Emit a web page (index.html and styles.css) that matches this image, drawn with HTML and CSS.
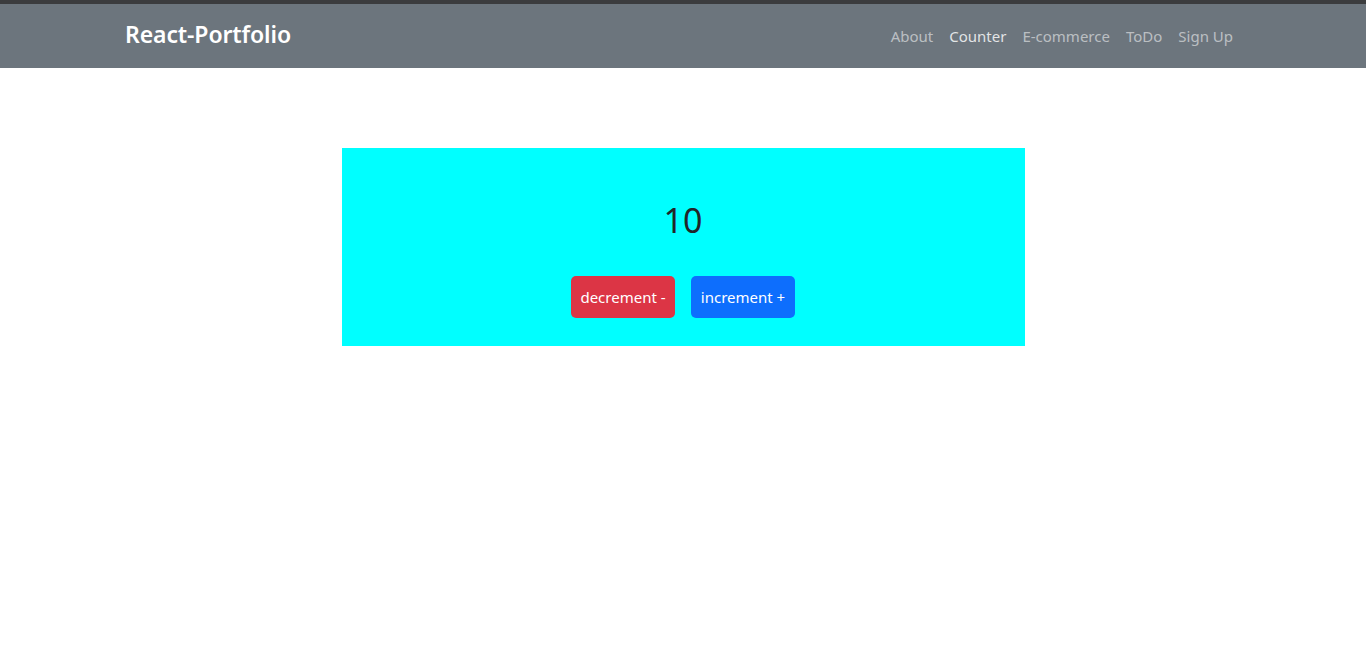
FILE: index.html
```html
<!DOCTYPE html>
<html lang="en">
<head>
<meta charset="utf-8">
<title>React-Portfolio</title>
<link rel="stylesheet" href="styles.css">
</head>
<body>
  <div class="topstrip"></div>
  <nav class="navbar">
    <div class="container">
      <a class="brand" href="#">React-Portfolio</a>
      <ul class="nav">
        <li><a class="nav-link" href="#">About</a></li>
        <li><a class="nav-link active" href="#">Counter</a></li>
        <li><a class="nav-link" href="#">E-commerce</a></li>
        <li><a class="nav-link" href="#">ToDo</a></li>
        <li><a class="nav-link" href="#">Sign Up</a></li>
      </ul>
    </div>
  </nav>
  <main class="main">
    <section class="counter">
      <h1 class="count">10</h1>
      <div class="actions">
        <button class="btn btn-danger">decrement -</button>
        <button class="btn btn-primary">increment +</button>
      </div>
    </section>
  </main>
</body>
</html>
```
FILE: styles.css
```css
* { box-sizing: border-box; }
html, body { margin: 0; padding: 0; }
body {
  font-family: "Noto Sans", "Open Sans", "Liberation Sans", sans-serif;
  background: #fff;
  color: #212529;
}
.topstrip {
  height: 4px;
  background: #3b3c3e;
}
.navbar {
  background: #6c757d;
  height: 64px;
  display: flex;
  align-items: center;
}
.container {
  width: 1116px;
  margin: 0 auto;
  display: flex;
  align-items: center;
  justify-content: space-between;
}
.brand {
  color: #fff;
  text-decoration: none;
  font-size: 23px;
  font-weight: 600;
  letter-spacing: -0.1px;
  margin-top: -4px;
}
.nav {
  list-style: none;
  margin: 0;
  padding: 0;
  display: flex;
}
.nav-link {
  display: block;
  padding: 0 8px;
  font-size: 15px;
  color: rgba(255, 255, 255, 0.55);
  text-decoration: none;
  line-height: 24px;
}
.nav-link.active {
  color: rgba(255, 255, 255, 0.82);
}
.main {
  padding-top: 80px;
  display: flex;
  justify-content: center;
}
.counter {
  width: 683px;
  height: 198px;
  background: #00ffff;
  display: flex;
  flex-direction: column;
  align-items: center;
  padding-top: 52px;
}
.count {
  margin: 0;
  font-size: 34px;
  font-weight: 400;
  line-height: 40px;
  color: #212529;
}
.actions {
  display: flex;
  gap: 16px;
  margin-top: 36px;
}
.btn {
  width: 104px;
  height: 42px;
  border: none;
  border-radius: 5px;
  color: #fff;
  font-family: inherit;
  font-size: 15px;
  padding: 0;
  cursor: pointer;
}
.btn-danger { background: #dc3545; }
.btn-primary { background: #0d6efd; }
```
